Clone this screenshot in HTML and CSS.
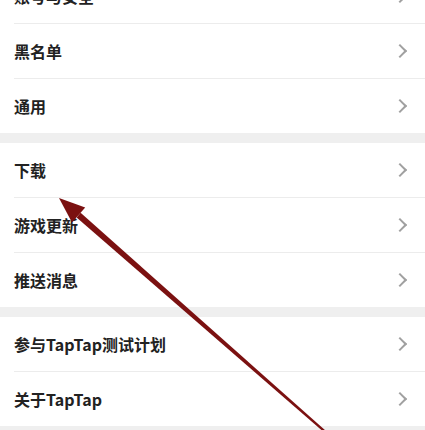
FILE: index.html
```html
<!DOCTYPE html>
<html lang="zh-CN">
<head>
    <meta charset="UTF-8">
    <meta name="viewport" content="width=device-width, initial-scale=1.0">
    <title>设置</title>
    <link rel="stylesheet" href="styles.css">
</head>
<body>
    <div class="settings">
        <ul class="group group-first">
            <li class="row"><span>账号与安全</span><i class="chev"></i></li>
            <li class="row"><span>黑名单</span><i class="chev"></i></li>
            <li class="row"><span>通用</span><i class="chev"></i></li>
        </ul>
        <ul class="group">
            <li class="row"><span>下载</span><i class="chev"></i></li>
            <li class="row"><span>游戏更新</span><i class="chev"></i></li>
            <li class="row"><span>推送消息</span><i class="chev"></i></li>
        </ul>
        <ul class="group">
            <li class="row"><span>参与TapTap测试计划</span><i class="chev"></i></li>
            <li class="row"><span>关于TapTap</span><i class="chev"></i></li>
        </ul>
    </div>

    <!-- pointer arrow drawn over the list -->
    <svg class="pointer" width="425" height="430" viewBox="0 0 425 430">
        <polygon points="76.6,217.4 80.6,212.8 326,431 324.4,432.6" fill="#7b1111"/>
        <polygon points="59,198 85.2,207.6 72,222.6" fill="#7b1111"/>
    </svg>
</body>
</html>
```

FILE: styles.css
```css
body { margin: 0; background: #efefef; font-family: "Noto Sans CJK SC", "Noto Sans", sans-serif; overflow: hidden; }
.settings { display: flex; flex-direction: column; gap: 10px; }
.group { list-style: none; margin: 0; padding: 0 0 0 14px; background: #fff; }
.group-first { margin-top: -31px; }
.row { display: flex; align-items: center; justify-content: space-between; height: 54px; border-bottom: 1px solid #ececec; padding-right: 20px; font-size: 16px; font-weight: bold; color: #222; }
.row:last-child { border-bottom: none; }
.chev { width: 8px; height: 8px; border-top: 2px solid #a0a0a0; border-right: 2px solid #a0a0a0; transform: rotate(45deg); }
.pointer { position: absolute; left: 0; top: 0; }
```
